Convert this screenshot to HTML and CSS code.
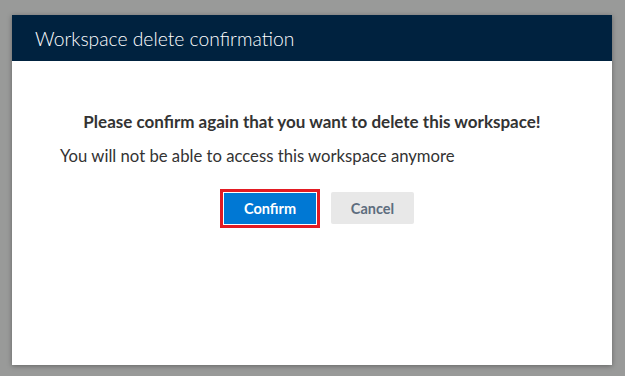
FILE: index.html
```html
<!DOCTYPE html>
<html>
<head>
<meta charset="utf-8">
<link rel="stylesheet" href="styles.css">
</head>
<body>
<div class="dialog">
  <div class="dialog-header">Workspace delete confirmation</div>
  <div class="dialog-body">
    <p class="lead">Please confirm again that you want to delete this workspace!</p>
    <p class="note">You will not be able to access this workspace anymore</p>
    <div class="actions">
      <button class="btn btn-primary">Confirm</button>
      <button class="btn btn-secondary">Cancel</button>
    </div>
  </div>
</div>
</body>
</html>
```
FILE: styles.css
```css
html, body {
  margin: 0;
  padding: 0;
}
body {
  background: #999a99;
  font-family: "Lato", "Open Sans", sans-serif;
  width: 625px;
  height: 376px;
  overflow: hidden;
}
.dialog {
  margin: 15px 0 0 12px;
  width: 600px;
  height: 350px;
  background: #ffffff;
  box-shadow: 0 1px 5px rgba(0, 0, 0, 0.35);
  display: flex;
  flex-direction: column;
}
.dialog-header {
  height: 46px;
  background: #00223f;
  color: #ffffff;
  font-weight: 300;
  font-size: 19.3px;
  display: flex;
  align-items: center;
  padding-left: 23px;
}
.dialog-body {
  display: flex;
  flex-direction: column;
  padding-top: 50px;
}
.lead {
  margin: 0;
  text-align: center;
  font-weight: 700;
  font-size: 17px;
  color: #333333;
  line-height: 22px;
}
.note {
  margin: 12px 0 0 48px;
  font-size: 16.7px;
  color: #333333;
  line-height: 22px;
}
.actions {
  display: flex;
  justify-content: center;
  gap: 15px;
  margin-top: 26px;
  padding-left: 14px;
}
.btn {
  font-family: inherit;
  font-size: 14.5px;
  font-weight: 700;
  border: none;
  padding: 0;
  cursor: pointer;
}
.btn-primary {
  width: 92px;
  height: 31px;
  background: #0078d4;
  color: #ffffff;
  outline: 3px solid #e31b23;
  outline-offset: 1px;
}
.btn-secondary {
  width: 83px;
  height: 32px;
  margin-top: -1px;
  background: #e8e8e8;
  color: #5d6d7e;
  border-radius: 2px;
}
```
